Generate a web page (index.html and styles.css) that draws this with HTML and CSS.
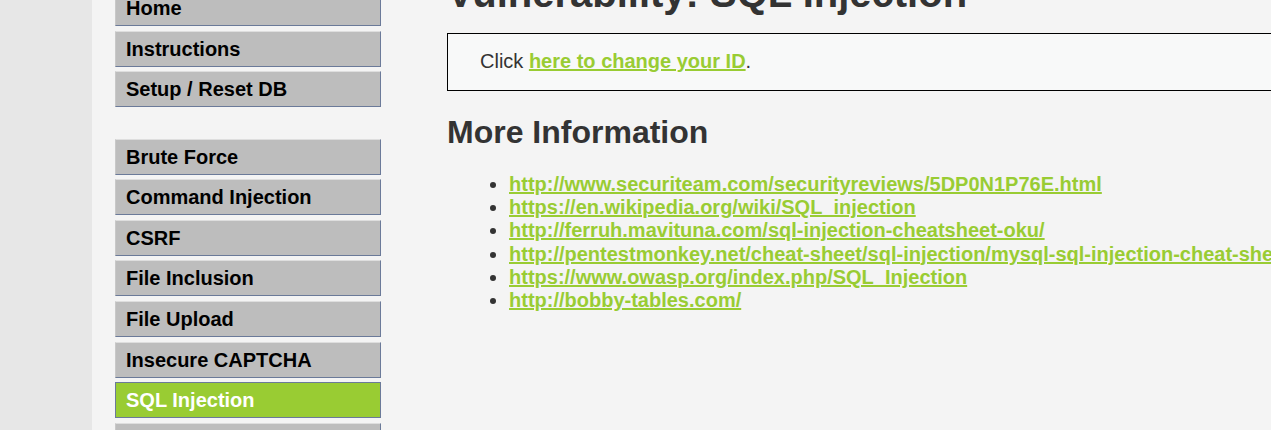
FILE: index.html
```html
<!DOCTYPE html>
<html lang="en">
<head>
<meta charset="utf-8">
<title>Vulnerability: SQL Injection</title>
<link rel="stylesheet" href="styles.css">
</head>
<body>
<div class="page">
  <nav class="menu">
    <ul class="menu-group">
      <li class="menu-item"><a href="#">Home</a></li>
      <li class="menu-item"><a href="#">Instructions</a></li>
      <li class="menu-item"><a href="#">Setup / Reset DB</a></li>
    </ul>
    <ul class="menu-group menu-group-gap">
      <li class="menu-item"><a href="#">Brute Force</a></li>
      <li class="menu-item"><a href="#">Command Injection</a></li>
      <li class="menu-item"><a href="#">CSRF</a></li>
      <li class="menu-item"><a href="#">File Inclusion</a></li>
      <li class="menu-item"><a href="#">File Upload</a></li>
      <li class="menu-item"><a href="#">Insecure CAPTCHA</a></li>
      <li class="menu-item selected"><a href="#">SQL Injection</a></li>
      <li class="menu-item"><a href="#">SQL Injection (Blind)</a></li>
    </ul>
  </nav>
  <main class="content">
    <h1 class="title">Vulnerability: SQL Injection</h1>
    <div class="vuln-box">
      Click <a href="#">here to change your ID</a>.
    </div>
    <h2 class="subtitle">More Information</h2>
    <ul class="links">
      <li><a href="#">http://www.securiteam.com/securityreviews/5DP0N1P76E.html</a></li>
      <li><a href="#">https://en.wikipedia.org/wiki/SQL_injection</a></li>
      <li><a href="#">http://ferruh.mavituna.com/sql-injection-cheatsheet-oku/</a></li>
      <li><a href="#">http://pentestmonkey.net/cheat-sheet/sql-injection/mysql-sql-injection-cheat-sheet</a></li>
      <li><a href="#">https://www.owasp.org/index.php/SQL_Injection</a></li>
      <li><a href="#">http://bobby-tables.com/</a></li>
    </ul>
  </main>
</div>
</body>
</html>
```
FILE: styles.css
```css
html, body {
  margin: 0;
  padding: 0;
  overflow: hidden;
}
body {
  background: #e7e7e7;
  font-family: "Liberation Sans", Arial, sans-serif;
  color: #333;
}
.page {
  display: flex;
  align-items: flex-start;
  margin-left: 92px;
  width: 1500px;
  min-height: 430px;
  background: #f4f4f4;
}
.menu {
  flex: none;
  width: 266px;
  margin-left: 23px;
  margin-top: -10px;
}
.menu-group {
  list-style: none;
  margin: 0;
  padding: 0;
}
.menu-group-gap {
  margin-top: 31.2px;
}
.menu-item a {
  display: block;
  height: 34px;
  line-height: 34px;
  padding: 0 10px;
  margin-bottom: 4.67px;
  border: 1px solid;
  border-color: #dedede #6b7a99 #6b7a99 #c8c8c8;
  background: #bdbdbd;
  color: #000;
  font-weight: bold;
  font-size: 20px;
  text-decoration: none;
  white-space: nowrap;
  overflow: hidden;
}
.menu-item.selected a {
  background: #99cc33;
  color: #fff;
  border-color: #6b7a99;
}
.content {
  flex: 1;
  margin-left: 66px;
}
.title {
  margin: -29px 0 17px;
  font-size: 40px;
  font-weight: bold;
  color: #333;
  white-space: nowrap;
}
.vuln-box {
  border: 1px solid #000;
  background: #f8f9f9;
  padding: 16px 32px 17px;
  font-size: 20px;
  line-height: 23px;
  color: #333;
}
.vuln-box a,
.links a {
  color: #99cc33;
  font-weight: bold;
}
.subtitle {
  margin: 23px 0 22px;
  font-size: 32px;
  font-weight: bold;
  color: #333;
}
.links {
  margin: 0;
  padding-left: 62px;
  font-size: 20px;
  line-height: 23.2px;
  color: #333;
  white-space: nowrap;
}
```
